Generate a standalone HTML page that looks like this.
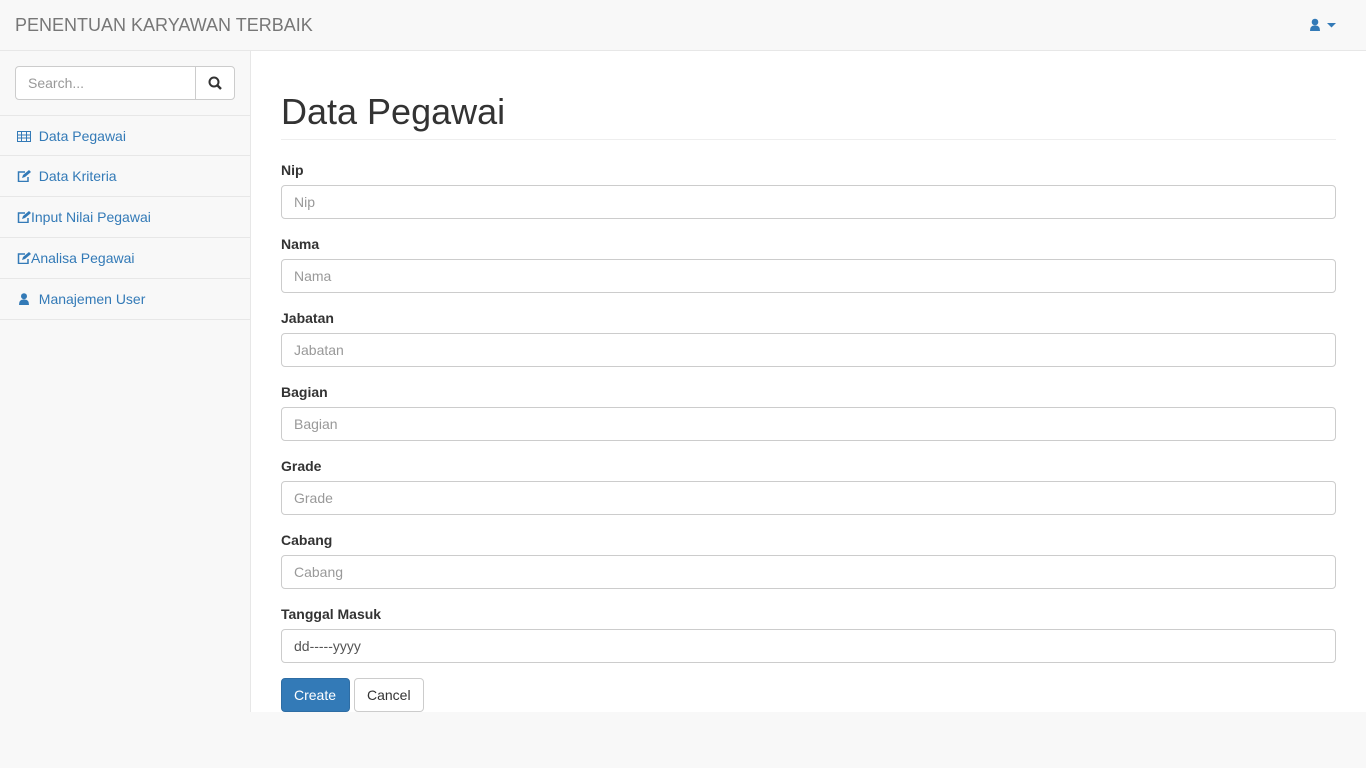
<!DOCTYPE html>
<html><head><style>
*{box-sizing:border-box}
body{margin:0;background:#f8f8f8;font-family:"Liberation Sans",sans-serif;font-size:14px;color:#333;width:1366px;height:768px;overflow:hidden;position:relative}
.nav{position:absolute;left:0;top:0;width:1366px;height:51px;border-bottom:1px solid #e7e7e7;background:#f8f8f8}
.brand{position:absolute;left:15px;top:15px;font-size:18px;color:#777}
.side{position:absolute;left:0;top:51px;width:251px;border-right:1px solid #e7e7e7;height:661px}
.search{position:absolute;left:15px;top:15px;width:220px;height:34px;border:1px solid #ccc;border-radius:4px;background:#fff}
.search span{position:absolute;left:12px;top:8px;color:#999}
.search .b{position:absolute;right:0;top:0;width:39px;height:32px;border-left:1px solid #ccc}
.menu{position:absolute;top:64px;left:0;width:250px}
.menu div{height:41px;border-bottom:1px solid #e7e7e7;color:#337ab7;padding:12px 0 0 17px;position:relative}
.menu div:first-child{border-top:1px solid #e7e7e7}
.menu svg{vertical-align:-1px}
.main{position:absolute;left:251px;top:51px;width:1115px;height:661px;background:#fff}
h1{position:absolute;left:30px;top:40px;margin:0;font-size:36px;font-weight:500}
.hr{position:absolute;left:30px;top:88px;width:1055px;border-top:1px solid #eee}
.g{position:absolute;left:30px;width:1055px}
.g label{display:block;font-weight:bold;height:23px}
.g .i{height:34px;border:1px solid #ccc;border-radius:4px;padding:8px 12px;color:#999}
.btn{position:absolute;top:627px;height:34px;border-radius:4px;padding:8px 12px;font-size:14px}
</style></head><body>
<div class="nav"><div class="brand">PENENTUAN KARYAWAN TERBAIK</div>
<svg style="position:absolute;left:1309px;top:18px" width="30" height="14"><circle cx="6" cy="4" r="3.3" fill="#337ab7"/><path d="M1 13 Q1 7 6 7.5 Q11 7 11 13Z" fill="#337ab7"/><path d="M18 5h9l-4.5 4.5z" fill="#337ab7"/></svg></div>
<div class="side">
<div class="search"><span>Search...</span><div class="b"><svg width="39" height="32"><circle cx="18" cy="15" r="4.5" fill="none" stroke="#333" stroke-width="2"/><path d="M21 18l4 4" stroke="#333" stroke-width="2.4"/></svg></div></div>
<div class="menu">
<div><svg width="14" height="12"><rect x="0.5" y="1.5" width="13" height="10" fill="none" stroke="#337ab7"/><path d="M0 5h14M0 8h14M4.5 1v11M9.5 1v11" stroke="#337ab7"/></svg>&nbsp; Data Pegawai</div>
<div><svg width="14" height="12"><path d="M8 2H1.5v9.5H11V7" fill="none" stroke="#337ab7" stroke-width="1.5"/><path d="M5 8l1-3 6-5 2 2-6 5z" fill="#337ab7"/></svg>&nbsp; Data Kriteria</div>
<div><svg width="14" height="12"><path d="M8 2H1.5v9.5H11V7" fill="none" stroke="#337ab7" stroke-width="1.5"/><path d="M5 8l1-3 6-5 2 2-6 5z" fill="#337ab7"/></svg>Input Nilai Pegawai</div>
<div><svg width="14" height="12"><path d="M8 2H1.5v9.5H11V7" fill="none" stroke="#337ab7" stroke-width="1.5"/><path d="M5 8l1-3 6-5 2 2-6 5z" fill="#337ab7"/></svg>Analisa Pegawai</div>
<div><svg width="14" height="12"><circle cx="7" cy="3.3" r="3" fill="#337ab7"/><path d="M2 12Q2 6 7 6.5Q12 6 12 12Z" fill="#337ab7"/></svg>&nbsp; Manajemen User</div>
</div></div>
<div class="main">
<h1>Data Pegawai</h1><div class="hr"></div>
<div class="g" style="top:111px"><label>Nip</label><div class="i">Nip</div></div>
<div class="g" style="top:185px"><label>Nama</label><div class="i">Nama</div></div>
<div class="g" style="top:259px"><label>Jabatan</label><div class="i">Jabatan</div></div>
<div class="g" style="top:333px"><label>Bagian</label><div class="i">Bagian</div></div>
<div class="g" style="top:407px"><label>Grade</label><div class="i">Grade</div></div>
<div class="g" style="top:481px"><label>Cabang</label><div class="i">Cabang</div></div>
<div class="g" style="top:555px"><label>Tanggal Masuk</label><div class="i" style="color:#555">dd-----yyyy</div></div>
<div class="btn" style="left:30px;width:69px;background:#337ab7;border:1px solid #2e6da4;color:#fff">Create</div>
<div class="btn" style="left:103px;width:70px;background:#fff;border:1px solid #ccc;color:#333">Cancel</div>
</div>
</body></html>
